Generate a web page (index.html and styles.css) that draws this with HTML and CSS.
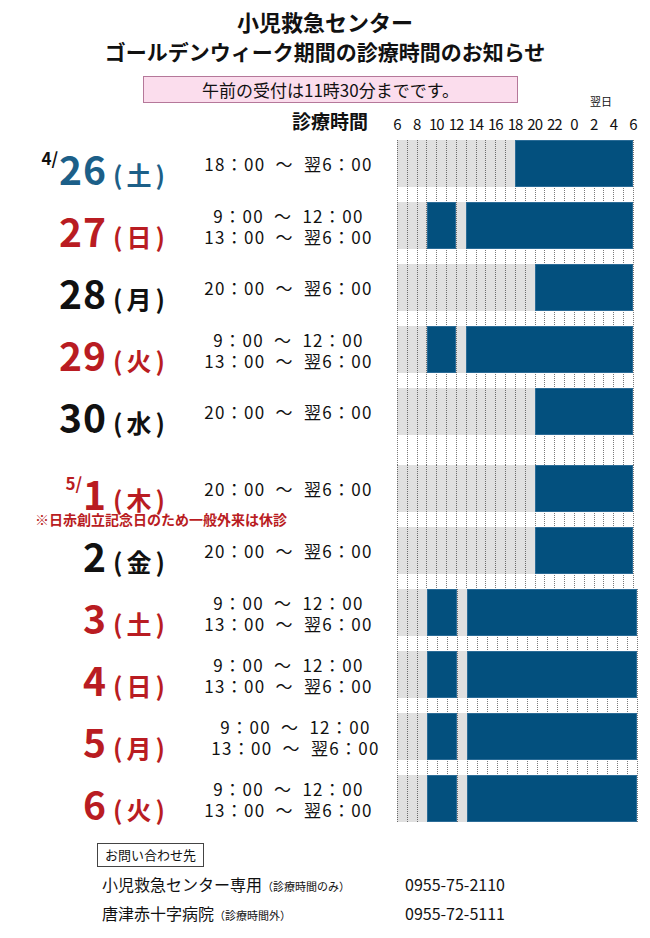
FILE: index.html
```html
<!DOCTYPE html>
<html lang="ja">
<head>
<meta charset="utf-8">
<title>小児救急センター ゴールデンウィーク期間の診療時間のお知らせ</title>
<link rel="stylesheet" href="styles.css">
</head>
<body>
<div class="page">
  <header class="head">
    <h1 class="title"><span class="title-main">小児救急センター</span><span class="title-sub">ゴールデンウィーク期間の診療時間のお知らせ</span></h1>
    <p class="notice">午前の受付は11時30分までです。</p>
  </header>

  <div class="scale-head">
    <div class="scale-title">診療時間</div>
    <div class="scale">
      <span class="next-day">翌日</span>
      <div class="ticks">
        <span>6</span><span>8</span><span>10</span><span>12</span><span>14</span><span>16</span><span>18</span><span>20</span><span>22</span><span>0</span><span>2</span><span>4</span><span>6</span>
      </div>
    </div>
  </div>

  <div class="rows">
    <div class="row">
      <div class="date"><div class="d blue"><span class="mon black">4/</span>26<span class="dow">(土)</span></div></div>
      <div class="time"><span>18：00 ～ 翌6：00</span></div>
      <div class="chart"><div class="track"><div class="bar from18"></div></div></div>
    </div>
    <div class="row">
      <div class="date"><div class="d red">27<span class="dow">(日)</span></div></div>
      <div class="time"><span>9：00 ～ 12：00</span><span>13：00 ～ 翌6：00</span></div>
      <div class="chart"><div class="track"><div class="bar am"></div><div class="bar pm"></div></div></div>
    </div>
    <div class="row">
      <div class="date"><div class="d">28<span class="dow">(月)</span></div></div>
      <div class="time"><span>20：00 ～ 翌6：00</span></div>
      <div class="chart"><div class="track"><div class="bar from20"></div></div></div>
    </div>
    <div class="row">
      <div class="date"><div class="d red">29<span class="dow">(火)</span></div></div>
      <div class="time"><span>9：00 ～ 12：00</span><span>13：00 ～ 翌6：00</span></div>
      <div class="chart"><div class="track"><div class="bar am"></div><div class="bar pm"></div></div></div>
    </div>
    <div class="row spaced">
      <div class="date"><div class="d">30<span class="dow">(水)</span></div></div>
      <div class="time"><span>20：00 ～ 翌6：00</span></div>
      <div class="chart"><div class="track"><div class="bar from20"></div></div></div>
    </div>
    <div class="row">
      <div class="date with-note">
        <div class="d red"><span class="mon">5/</span>1<span class="dow">(木)</span></div>
        <div class="note">※日赤創立記念日のため一般外来は休診</div>
      </div>
      <div class="time"><span>20：00 ～ 翌6：00</span></div>
      <div class="chart"><div class="track"><div class="bar from20"></div></div></div>
    </div>
    <div class="row">
      <div class="date"><div class="d">2<span class="dow">(金)</span></div></div>
      <div class="time"><span>20：00 ～ 翌6：00</span></div>
      <div class="chart"><div class="track"><div class="bar from20"></div></div></div>
    </div>
    <div class="row wide">
      <div class="date"><div class="d red">3<span class="dow">(土)</span></div></div>
      <div class="time"><span>9：00 ～ 12：00</span><span>13：00 ～ 翌6：00</span></div>
      <div class="chart"><div class="track"><div class="bar am"></div><div class="bar pm"></div></div></div>
    </div>
    <div class="row wide">
      <div class="date"><div class="d red">4<span class="dow">(日)</span></div></div>
      <div class="time"><span>9：00 ～ 12：00</span><span>13：00 ～ 翌6：00</span></div>
      <div class="chart"><div class="track"><div class="bar am"></div><div class="bar pm"></div></div></div>
    </div>
    <div class="row wide">
      <div class="date"><div class="d red">5<span class="dow">(月)</span></div></div>
      <div class="time shifted"><span>9：00 ～ 12：00</span><span>13：00 ～ 翌6：00</span></div>
      <div class="chart"><div class="track"><div class="bar am"></div><div class="bar pm"></div></div></div>
    </div>
    <div class="row wide last">
      <div class="date"><div class="d red">6<span class="dow">(火)</span></div></div>
      <div class="time"><span>9：00 ～ 12：00</span><span>13：00 ～ 翌6：00</span></div>
      <div class="chart"><div class="track"><div class="bar am"></div><div class="bar pm"></div></div></div>
    </div>
  </div>

  <footer class="contact">
    <div class="contact-title">お問い合わせ先</div>
    <div class="contact-list">
      <div class="contact-row"><span>小児救急センター専用<span class="sub">（診療時間のみ）</span></span><span>0955-75-2110</span></div>
      <div class="contact-row"><span>唐津赤十字病院<span class="sub">（診療時間外）</span></span><span>0955-72-5111</span></div>
    </div>
  </footer>
</div>
</body>
</html>
```

FILE: styles.css
```css
* { box-sizing: border-box; }

body {
  margin: 0;
  background: #fff;
  color: #111;
  font-family: "Noto Sans CJK JP", "Noto Sans", sans-serif;
}

.page {
  width: 650px;
  padding-top: 6px;
}

.title {
  margin: 0;
  text-align: center;
  font-weight: 700;
}

.title-main {
  display: block;
  font-size: 22px;
  line-height: 30px;
}

.title-sub {
  display: block;
  font-size: 21px;
  line-height: 30px;
}

.notice {
  margin: 10px 0 0 143px;
  width: 375px;
  height: 27px;
  border: 1px solid #b5789a;
  background: #fbdded;
  text-align: center;
  font-size: 17px;
  line-height: 25px;
}

/* scale header */
.scale-head {
  display: grid;
  grid-template-columns: 397px 236px;
  margin-top: -7px;
}

.scale-title {
  align-self: end;
  text-align: right;
  padding-right: 29px;
  font-size: 19px;
  line-height: 24px;
  font-weight: 700;
}

.next-day {
  display: block;
  margin-left: 193px;
  font-size: 11px;
  line-height: 11px;
}

.ticks {
  display: grid;
  grid-template-columns: repeat(13, 1fr);
  margin: 8px -9.83px 0;
  font-size: 15px;
  line-height: 18px;
  text-align: center;
  letter-spacing: -1px;
}

/* rows */
.rows { margin-top: 7px; }

.row {
  display: grid;
  grid-template-columns: 180px 217px 236px;
}

.row.wide { grid-template-columns: 180px 217px 240px; }

.row > * { padding-bottom: 15px; }
.row.spaced > * { padding-bottom: 30px; }
.row.last > * { padding-bottom: 0; }

.date {
  display: flex;
  justify-content: flex-end;
  align-items: flex-end;
  padding-right: 11px;
}

.date.with-note {
  flex-direction: column;
  padding-bottom: 0;
}

.d {
  font-size: 39px;
  line-height: 38px;
  font-weight: 700;
  white-space: nowrap;
  letter-spacing: 1px;
}

.dow {
  font-size: 25px;
  line-height: 0;
  letter-spacing: 4px;
  margin-left: 6px;
}

.mon {
  font-size: 17px;
  line-height: 0;
  vertical-align: 20px;
  margin-right: 1px;
  letter-spacing: 0;
}

.blue { color: #1c5f88; }
.red { color: #b91c22; }
.black { color: #111; }

.note {
  align-self: flex-start;
  margin-left: 35px;
  white-space: nowrap;
  font-size: 14px;
  line-height: 15px;
  font-weight: 700;
  color: #b91c22;
  letter-spacing: 0;
}

.time {
  display: flex;
  flex-direction: column;
  justify-content: center;
  align-items: center;
  font-size: 17px;
  line-height: 21px;
  white-space: nowrap;
  letter-spacing: 1.3px;
  word-spacing: 5px;
}

.time.shifted { padding-left: 14px; }

.chart { position: relative; }

.chart::before {
  content: "";
  position: absolute;
  top: 0;
  bottom: 0;
  left: 0;
  right: -1px;
  background: repeating-linear-gradient(90deg, #7a7a7a 0 1px, transparent 1px 9.8333px);
  -webkit-mask-image: repeating-linear-gradient(180deg, #000 0 1px, transparent 1px 2px);
  mask-image: repeating-linear-gradient(180deg, #000 0 1px, transparent 1px 2px);
}

.row.wide .chart::before {
  background: repeating-linear-gradient(90deg, #7a7a7a 0 1px, transparent 1px 10px);
}

.track {
  position: relative;
  height: 47px;
  display: grid;
  grid-template-columns: repeat(24, 1fr);
  background: rgba(0, 0, 0, 0.12);
}

.bar {
  grid-row: 1;
  background: #03507e;
  box-shadow: inset 0 0 0 1px #2b6c97;
}

.am { grid-column: 4 / 7; }
.pm { grid-column: 8 / 25; }
.from18 { grid-column: 13 / 25; }
.from20 { grid-column: 15 / 25; }

/* contact */
.contact {
  margin: 19px 0 0 97px;
}

.contact-title {
  display: inline-block;
  border: 1.5px solid #444;
  font-size: 13px;
  line-height: 20px;
  padding: 1px 7px;
}

.contact-list { margin: 4px 0 0 5px; }

.contact-row {
  display: grid;
  grid-template-columns: 303px auto;
  font-size: 16px;
  line-height: 27px;
}

.sub { font-size: 11px; }
```
